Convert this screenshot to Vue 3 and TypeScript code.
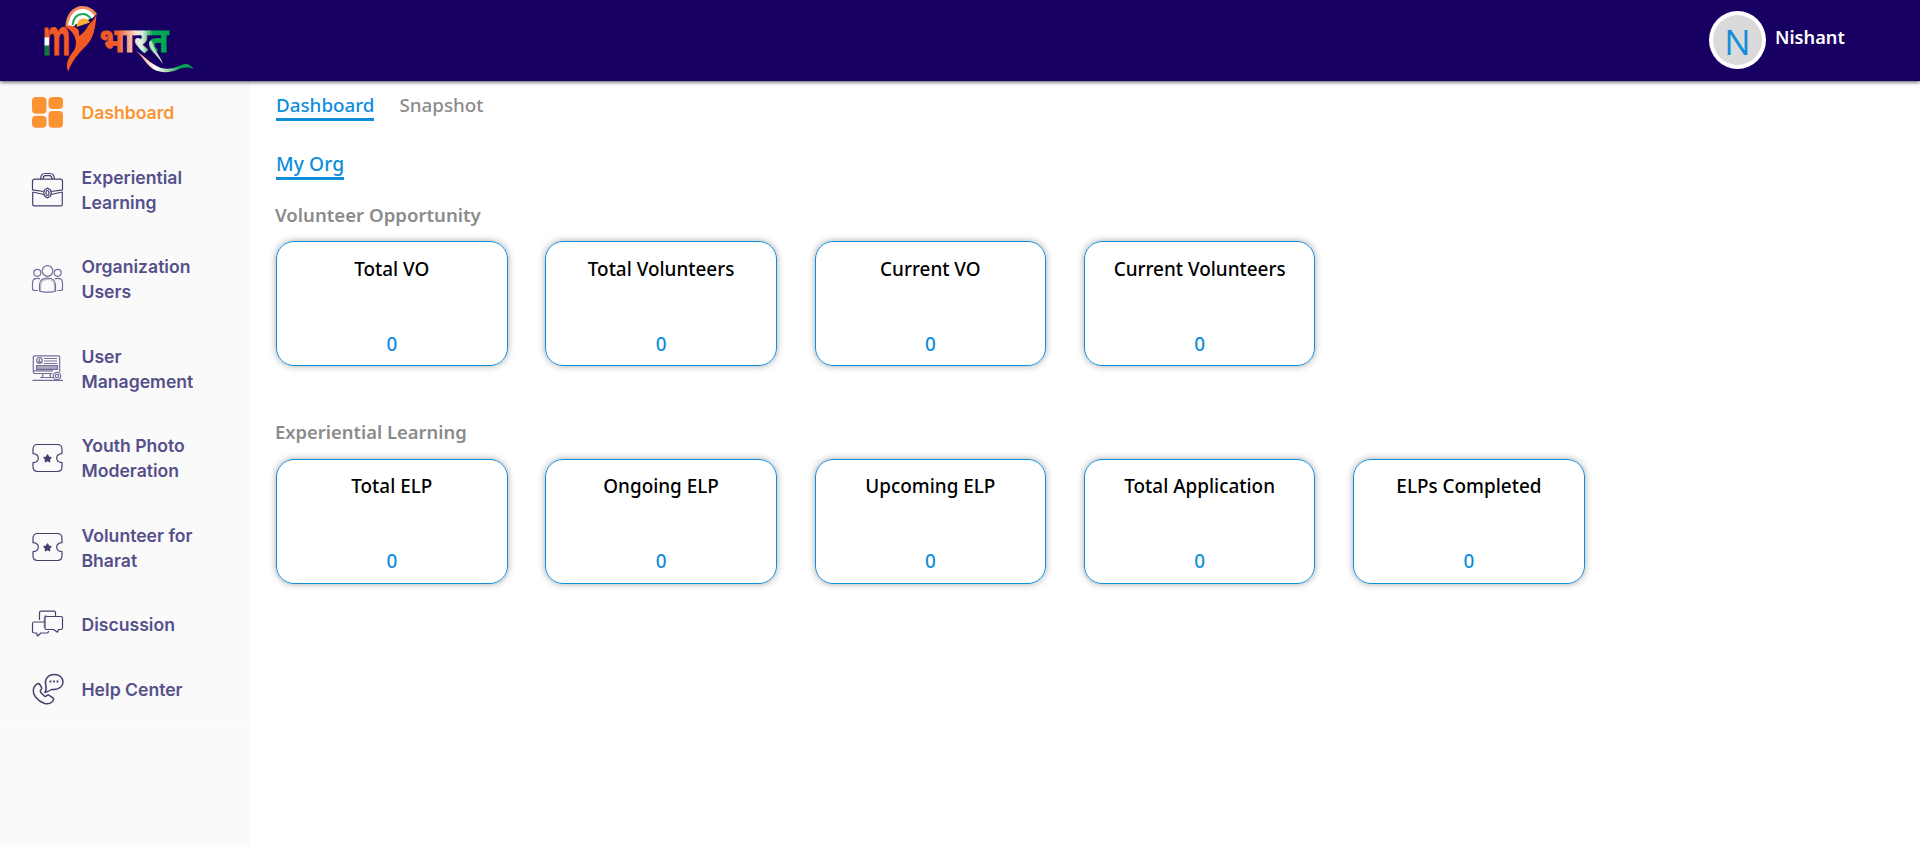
<script setup lang="ts">
interface NavItem {
  lines: string[]
  icon: string
  active?: boolean
}
interface Stat {
  label: string
  value: number
}
interface Section {
  title: string
  stats: Stat[]
}

const nav: NavItem[] = [
  { lines: ['Dashboard'], icon: 'grid', active: true },
  { lines: ['Experiential', 'Learning'], icon: 'case' },
  { lines: ['Organization', 'Users'], icon: 'users' },
  { lines: ['User', 'Management'], icon: 'screen' },
  { lines: ['Youth Photo', 'Moderation'], icon: 'ticket' },
  { lines: ['Volunteer for', 'Bharat'], icon: 'ticket' },
  { lines: ['Discussion'], icon: 'chat' },
  { lines: ['Help Center'], icon: 'phone' },
]

const sections: Section[] = [
  {
    title: 'Volunteer Opportunity',
    stats: [
      { label: 'Total VO', value: 0 },
      { label: 'Total Volunteers', value: 0 },
      { label: 'Current VO', value: 0 },
      { label: 'Current Volunteers', value: 0 },
    ],
  },
  {
    title: 'Experiential Learning',
    stats: [
      { label: 'Total ELP', value: 0 },
      { label: 'Ongoing ELP', value: 0 },
      { label: 'Upcoming ELP', value: 0 },
      { label: 'Total Application', value: 0 },
      { label: 'ELPs Completed', value: 0 },
    ],
  },
]
</script>

<template>
  <div class="page">
    <header class="topbar">
      <svg class="logo" viewBox="40 0 160 80" width="160" height="80">
        <defs>
          <linearGradient id="flagV" gradientUnits="userSpaceOnUse" x1="0" y1="27" x2="0" y2="55">
            <stop offset="0.34" stop-color="#f15a22" />
            <stop offset="0.4" stop-color="#fff" />
            <stop offset="0.62" stop-color="#fff" />
            <stop offset="0.7" stop-color="#0b7a3e" />
          </linearGradient>
          <linearGradient id="flagH" gradientUnits="userSpaceOnUse" x1="100" y1="0" x2="170" y2="0">
            <stop offset="0.25" stop-color="#f15a29" />
            <stop offset="0.52" stop-color="#f6e3d6" />
            <stop offset="0.6" stop-color="#dff0e0" />
            <stop offset="0.76" stop-color="#00a651" />
          </linearGradient>
          <linearGradient id="tail" gradientUnits="userSpaceOnUse" x1="135" y1="0" x2="194" y2="0">
            <stop offset="0" stop-color="#f58a60" />
            <stop offset="0.35" stop-color="#fff" />
            <stop offset="0.6" stop-color="#8fcb9b" />
            <stop offset="0.75" stop-color="#00a651" />
          </linearGradient>
          <clipPath id="stemClip"><rect x="40" y="20" width="9.500" height="40" /></clipPath>
          <clipPath id="restClip"><rect x="49.500" y="20" width="30" height="40" /></clipPath>
        </defs>
        <g class="word-m">
          <text x="42.500" y="54.500" textLength="28" lengthAdjust="spacingAndGlyphs" fill="url(#flagV)" stroke="url(#flagV)" clip-path="url(#stemClip)">m</text>
          <text x="42.500" y="54.500" textLength="28" lengthAdjust="spacingAndGlyphs" fill="#f15a22" stroke="#f15a22" clip-path="url(#restClip)">m</text>
        </g>
        <path d="M65.500 26C66 14 73 6 82.500 6c6 0 11 3 14.500 8L90 20l-20 6z" fill="#f58a5c" />
        <path d="M68 26C69 16 74.500 9 82.500 9c5 0 9 2.500 12 7l-5 5-18 6z" fill="#fff" />
        <path d="M72.500 25c1-6.500 4.500-11 10-11 3.500 0 6.500 2 8.500 5" fill="none" stroke="#1ba65a" stroke-width="2" />
        <path d="M74.500 25l18-7-3 8-12 4z" fill="#180062" />
        <path d="M76.500 27c.5-5 3-8.500 7-8.500 3 0 5 1.500 6.500 4z" fill="#fbb034" />
        <path d="M64.500 26.500C69 24.500 74 26 77 28.500c3 2 1.500 5 2.500 7.500 5-3.500 8-9 9.500-11.500 3-3 6-6 7.500-10C95.500 27 94 38 86 46c-5.500 5.500-12 11-18 25.500-3-8 1-15 6-21C77.500 45 77.500 33 64.500 26.500z" fill="#f15a22" />
        <text class="word-bharat" x="99.500" y="51.500" textLength="69" lengthAdjust="spacingAndGlyphs" fill="url(#flagH)" stroke="url(#flagH)" stroke-width="0.900">भारत</text>
        <path d="M136 51c9 5 14 13 25 17 13 3 19-4 25-4 3 0 5 2 8 5-7-3-13-1-17 1-8 3-17 3-24-1-7-5-10-12-17-18z" fill="url(#tail)" />
        <path d="M149 42c0 7 9 15 14 22-2-7-9-14-11-23z" fill="#b9dfc0" />
      </svg>
      <div class="account">
        <div class="avatar">N</div>
        <span class="name">Nishant</span>
      </div>
    </header>

    <div class="body">
      <aside class="sidebar">
        <nav class="nav">
          <a v-for="(item, i) in nav" :key="i" class="item" :class="{ active: item.active }">
            <svg class="icon" :class="'icon-' + item.icon" viewBox="0 0 32 32" width="32" height="32">
              <g v-if="item.icon === 'grid'" fill="#fb9333">
                <rect x="0" y="0" width="14.500" height="16.800" rx="4" />
                <rect x="16.500" y="0" width="14.500" height="12" rx="4" />
                <rect x="0" y="18.800" width="14.500" height="12" rx="4" />
                <rect x="16.500" y="14" width="14.500" height="16.800" rx="4" />
              </g>
              <g v-else-if="item.icon === 'case'" class="line">
                <path d="M8.500 6.300C8.700 2.500 10.500.5 13 .5h5c2.500 0 4.300 2 4.500 5.800M11 6c.2-2.200 1-3.300 2.300-3.300h4.400c1.300 0 2.100 1.100 2.300 3.300" />
                <path d="M1.800 6.200h27.400l1.300 1.300v9.300L19 18.500M12 18.500.5 16.800V7.500l1.300-1.300" />
                <path d="M.7 19v12.500q0 1.300 1.300 1.300h27q1.300 0 1.300-1.300V19L19 21.500M12 21.500.7 19" />
                <path d="M15.500 15l3 2 .8 3-.8 3-3 2-3-2-.8-3 .8-3z" />
                <ellipse cx="15.500" cy="20" rx="1.500" ry="2.500" />
              </g>
              <g v-else-if="item.icon === 'users'" class="line soft">
                <circle cx="15.500" cy="8" r="5.300" /><circle cx="5.300" cy="9.800" r="3.500" /><circle cx="25.700" cy="9.800" r="3.500" />
                <path d="M7.500 28v-6.500c0-4 3.500-6.300 8-6.300s8 2.300 8 6.300V28q-2 1.200-8 1.200T7.500 28zM6 27.500H2.500q-2 0-2-2V20c0-3 2-4.700 5-4.700q1.500 0 2.600.6M25 27.500h3.500q2 0 2-2V20c0-3-2-4.700-5-4.700q-1.500 0-2.600.6" />
                <path d="M8.500 28v-5c0-4 3-6.500 7-6.500s7 2.500 7 6.500v5" opacity=".5" />
              </g>
              <g v-else-if="item.icon === 'screen'" class="line soft">
                <path d="M20.500 21.500H2.500q-1.200 0-1.200-1.200V5q0-1.200 1.200-1.200h24q1.200 0 1.200 1.200v15M1.500 18.800H21" />
                <circle cx="7.500" cy="8.500" r="2.800" /><path d="M7.500 7v2M5.800 10.500q1.700-1.700 3.400 0M12 6.500h13M12 9h13M12 11.500h13M11 21.500 10.500 25.500M18 21.500l.5 4M8 25.500h13M.5 28.300h30.500" />
                <rect x="4.500" y="13.500" width="21" height="3.800" class="fill" />
                <circle cx="25" cy="24" r="3.700" /><circle cx="25" cy="24" r="1.700" />
              </g>
              <g v-else-if="item.icon === 'ticket'" class="line">
                <path d="M5.500 2.500h20q4.500 0 4.500 5v4.200c-3 .2-5.300 1.900-5.300 4.500s2.300 4.200 5.300 4.500v3.800q0 5-4.500 5h-20Q1 29.500 1 24.500v-3.800c3-.3 5.300-1.900 5.300-4.500S4 11.900 1 11.700V7.500q0-5 4.500-5z" />
                <path class="solid star" d="M15.500 12.900l1.200 2.100 2.400.5-1.600 1.800.2 2.500-2.200-1-2.200 1 .2-2.500-1.600-1.800 2.400-.5z" />
              </g>
              <g v-else-if="item.icon === 'chat'" class="line">
                <path d="M7.500 12V4.700q0-1.500 1.500-1.500h13q1.500 0 1.500 1.500v3.200" />
                <path d="M12.500 14H2Q.5 14 .5 15.500v8Q.5 25 2 25h2.500l1 3 3.500-3h6q1.500 0 1.500-2" />
                <path d="M14.500 8.500H29q1.500 0 1.500 1.500v10q0 1.500-1.500 1.500h-2.500l-1 2.700-4-2.700h-7q-1.500 0-1.500-1.500V10q0-1.500 1.500-1.500z" />
                <path d="M12.300 20v-9.500q0-3 2.500-3" opacity=".55" />
              </g>
              <g v-else class="line heavy">
                <path d="M6.300 10.500C1 12.500-.5 19 4 24.500s11.500 8.500 16 4.500q2.500-2.300 1-4.200l-3.800-2.500q-1.500-.7-2.700.5-1 1.300-2.500 0l-3.300-3.500q-1-1.300 0-2.200 1.500-1.200.8-2.700l-2-3.400q-.5-.7-1.200-.5z" />
                <path d="M13 19.500q1.800-3 .8-7.500C12 7 16 1.500 22 1.500S31 5 31 9s-3.500 7.500-9 7.500h-2.500Q16.500 18.500 13 19.500z" />
                <path class="solid" d="M17.500 7.500h1.900v1.900h-1.900zM21 7.500h1.900v1.900H21zM24.500 7.500h1.900v1.900h-1.900z" />
              </g>
            </svg>
            <span class="label"><span v-for="line in item.lines" :key="line" class="line-text">{{ line }}</span></span>
          </a>
        </nav>
      </aside>

      <main class="content">
        <div class="tabs">
          <a class="tab selected">Dashboard</a>
          <a class="tab">Snapshot</a>
        </div>
        <div class="tabs scope">
          <a class="tab selected">My Org</a>
        </div>
        <section v-for="s in sections" :key="s.title" class="section">
          <h2 class="heading">{{ s.title }}</h2>
          <div class="cards">
            <article v-for="c in s.stats" :key="c.label" class="card">
              <span class="card-label">{{ c.label }}</span>
              <span class="card-value">{{ c.value }}</span>
            </article>
          </div>
        </section>
      </main>
    </div>
  </div>
</template>

<style>
body {
  margin: 0;
  background: #fff;
}
</style>

<style scoped>
.page {
  height: 847px;
  overflow: hidden;
  display: flex;
  flex-direction: column;
  font-family: 'Noto Sans', 'Open Sans', sans-serif;
  font-size: 18.9px;
  font-weight: 500;
}
.topbar {
  flex: none;
  height: 81px;
  box-sizing: border-box;
  padding: 0 74px 0 40px;
  display: flex;
  justify-content: space-between;
  align-items: flex-start;
  background: #180062;
  box-shadow: 0 1px 4px rgba(0, 0, 0, 0.7);
  position: relative;
  z-index: 1;
}
.word-m {
  font-family: 'Open Sans', sans-serif;
  font-size: 49px;
  font-weight: 700;
  stroke-width: 0.8;
}
.word-bharat {
  font-family: 'Noto Sans Devanagari', 'Noto Sans', sans-serif;
  font-size: 33px;
  font-weight: 700;
}
.account {
  display: flex;
  padding-top: 11px;
}
.avatar {
  box-sizing: border-box;
  width: 57px;
  height: 58px;
  border: 4px solid #fff;
  border-radius: 50%;
  background: #dadada;
  color: #168dd9;
  font-family: 'Open Sans', sans-serif;
  font-size: 35px;
  font-weight: 400;
  line-height: 54px;
  text-align: center;
}
.name {
  width: 71px;
  margin-left: 9px;
  line-height: 53px;
  color: #fff;
  font-size: 18.2px;
  font-weight: 600;
  white-space: nowrap;
}
.body {
  flex: 1;
  display: flex;
}
.sidebar {
  width: 250px;
  background: #fafafa;
}
.nav {
  border-bottom: 1px solid #fff;
}
.item {
  display: flex;
  align-items: center;
  padding: 20px 0 20px 32px;
  color: #55508a;
  font-family: Inter, sans-serif;
  font-size: 17.6px;
  font-weight: 600;
  line-height: 24.75px;
}
.item.active {
  color: #fb9333;
}
.icon {
  flex: none;
  margin: -4px 17.500px -4px 0;
  overflow: visible;
}
.icon-case {
  margin-top: -8px;
}
.icon-users,
.icon-screen,
.icon-ticket,
.icon-chat,
.icon-phone {
  margin-top: -6.500px;
}
.line-text {
  display: block;
}
.line {
  fill: none;
  stroke: #46406f;
  stroke-width: 1.2;
  stroke-linejoin: round;
}
.soft {
  stroke: #746f98;
}
.heavy {
  stroke-width: 1.5;
}
.solid {
  fill: #46406f;
  stroke: none;
}
.star {
  stroke: #46406f;
}
.fill {
  fill: #aaa7c0;
}
.content {
  flex: 1;
  padding: 10px 0 0 26px;
}
.tabs {
  display: flex;
  gap: 25px;
  height: 30px;
}
.scope {
  margin-top: 29px;
}
.tab {
  box-sizing: border-box;
  height: 30px;
  line-height: 28px;
  font-size: 18.8px;
  color: #8b8b8b;
}
.tab.selected {
  color: #0d8ddb;
  border-bottom: 3px solid #0d8ddb;
}
.scope .tab {
  font-size: 19.2px;
  letter-spacing: 0.1px;
}
.section {
  margin-top: 20px;
}
.section + .section {
  margin-top: 51px;
}
.heading {
  margin: 0 0 11px -1px;
  font-size: 18.6px;
  font-weight: 580;
  line-height: 30px;
  color: #8b8b8b;
}
.section + .section .heading {
  margin-bottom: 12px;
  font-size: 18.4px;
}
.cards {
  display: flex;
  gap: 37.700px;
}
.card {
  box-sizing: border-box;
  width: 231.600px;
  height: 125px;
  padding: 12px 0 6px;
  border: 1px solid #0d8ddb;
  border-radius: 18px;
  box-shadow: 0 0 7px rgba(0, 0, 0, 0.35);
  display: flex;
  flex-direction: column;
  align-items: center;
  justify-content: space-between;
  line-height: 30px;
}
.section + .section .card {
  padding: 11px 0 7px;
}
.card-label {
  color: #000;
}
.card-value {
  color: #0d8ddb;
}
</style>
